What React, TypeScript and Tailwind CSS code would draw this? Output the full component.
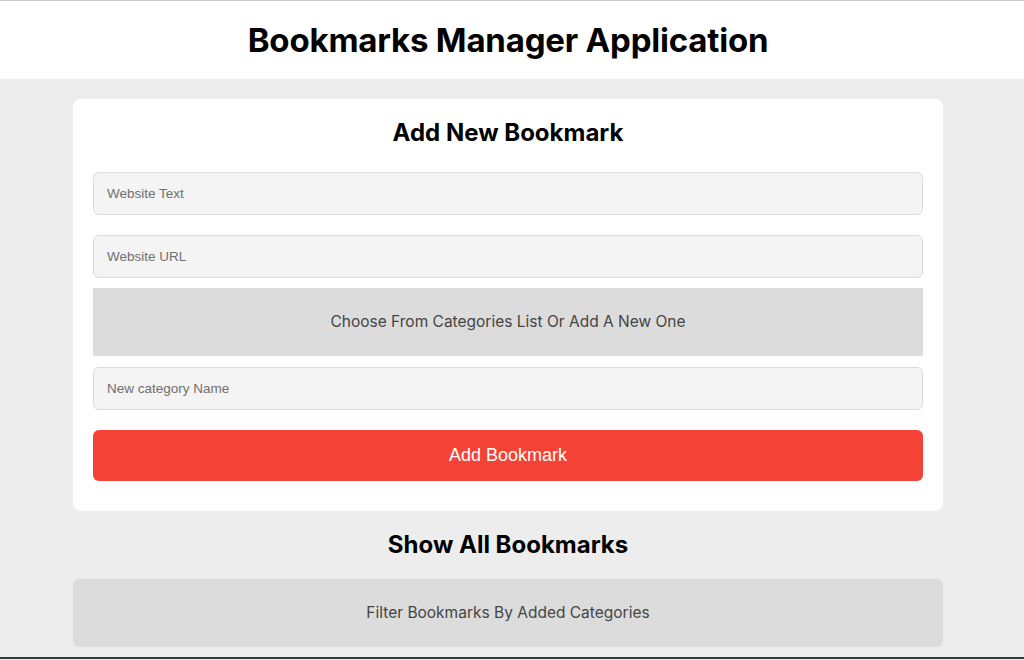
import React from "react";

const heading = "font-['Inter','Noto_Sans',sans-serif]";

function Field({ placeholder }: { placeholder: string }) {
  return (
    <input
      type="text"
      placeholder={placeholder}
      className="h-[43px] w-full rounded-md border border-[#dcdcdc] bg-[#f4f4f4] px-[13px] text-[13.5px] text-[#333] placeholder:text-[#6f6f6f] outline-none font-['Liberation_Sans',Arial,sans-serif]"
    />
  );
}

export default function App() {
  return (
    <div className="min-h-[660px] bg-[#ededed] border-t border-[#c8c8c8]">
      <header className="bg-white">
        <div className="flex h-[78px] w-[1016px] items-center justify-center pt-[2px]">
          <h1 className={`${heading} text-[33px] font-bold tracking-[-0.2px] text-black`}>
            Bookmarks Manager Application
          </h1>
        </div>
      </header>

      <div className="w-[1016px]">
        <main className="mx-auto w-[870px] pt-5">
          <section className="rounded-lg bg-white px-5 pt-[18px] pb-[30px]">
            <h2 className={`${heading} mb-[23px] text-center text-[24px] leading-[32px] font-bold text-black`}>
              Add New Bookmark
            </h2>
            <div className="flex flex-col">
              <Field placeholder="Website Text" />
              <div className="mt-5">
                <Field placeholder="Website URL" />
              </div>
              <div
                className={`${heading} mt-[10px] flex h-[68px] items-center justify-center bg-[#dcdcdc] text-[15.5px] text-[#444]`}
              >
                Choose From Categories List Or Add A New One
              </div>
              <div className="mt-[11px]">
                <Field placeholder="New category Name" />
              </div>
              <button className="mt-5 h-[51px] w-full rounded-md bg-[#f44336] text-[18px] text-white font-['Liberation_Sans',Arial,sans-serif]">
                Add Bookmark
              </button>
            </div>
          </section>

          <h2 className={`${heading} mt-[18px] mb-[18px] text-center text-[24px] leading-[32px] font-bold text-black`}>
            Show All Bookmarks
          </h2>

          <div
            className={`${heading} flex h-[68px] items-center justify-center rounded-md bg-[#dcdcdc] text-[15.5px] text-[#444]`}
          >
            Filter Bookmarks By Added Categories
          </div>
        </main>
      </div>
      <div className="mt-[10px] border-t-2 border-[#2f3a48]" />
    </div>
  );
}
